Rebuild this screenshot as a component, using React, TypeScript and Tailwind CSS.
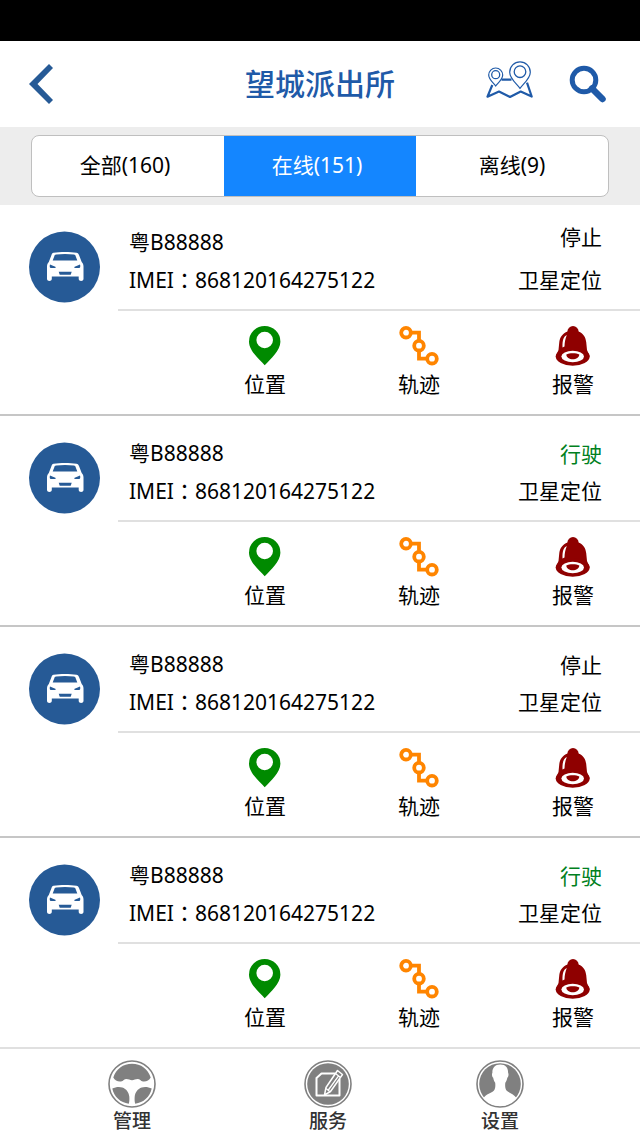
type Status = 'stopped' | 'driving';

interface Vehicle {
  id: number;
  plate: string;
  imei: string;
  status: Status;
  spaced?: boolean;
}

const vehicles: Vehicle[] = [
  { id: 1, plate: '粤B88888', imei: '868120164275122', status: 'stopped', spaced: true },
  { id: 2, plate: '粤B88888', imei: '868120164275122', status: 'driving' },
  { id: 3, plate: '粤B88888', imei: '868120164275122', status: 'stopped' },
  { id: 4, plate: '粤B88888', imei: '868120164275122', status: 'driving' },
];

const tabs = [
  { label: '全部(160)', active: false },
  { label: '在线(151)', active: true },
  { label: '离线(9)', active: false },
];

function BackIcon() {
  return (
    <svg width="24" height="40" viewBox="0 0 24 40" fill="#265a96">
      <path d="M0 20 20 0l4 4L8.5 20 24 36l-4 4z" />
    </svg>
  );
}

function MapIcon() {
  return (
    <svg width="48" height="38" viewBox="0 0 48 38" fill="none" stroke="#1f5aa8">
      <path
        d="M6.3 24 1.5 35.7 13 30.6 24 36l10.7-5.4 11 4.9L41 21.7M15.5 18.7H25.500"
        strokeWidth="2.2"
        strokeLinejoin="round"
      />
      <path d="M9.7 25C7.5 22 2.7 18.5 2.7 14a7 7 0 0 1 14 0c0 4.5-4.8 8-7 11z" strokeWidth="1.2" />
      <circle cx="9.7" cy="13.7" r="4" strokeWidth="1.3" />
      <path d="M34 27.3C31 23 23.7 17.7 23.7 11.2a10.3 10.3 0 0 1 20.6 0C44.3 17.7 37 23 34 27.3z" strokeWidth="1.2" />
      <circle cx="34" cy="10.7" r="5.8" strokeWidth="1.3" />
    </svg>
  );
}

function SearchIcon() {
  return (
    <svg width="38" height="38" viewBox="0 0 38 38" fill="none" stroke="#1f5aa8">
      <circle cx="15" cy="15" r="11.8" strokeWidth="5" />
      <path d="M23 23.500 33.500 34" strokeWidth="6.500" strokeLinecap="round" />
    </svg>
  );
}

function CarBadge() {
  return (
    <svg width="71" height="72" viewBox="0 0 71 72">
      <circle cx="35.5" cy="36" r="35.5" fill="#265a96" />
      <path
        d="M24.5 21.8C31 20.8 41 20.8 47.5 21.8c1.400.3 2 1 2.600 2.400l2.600 6.800c1.200 1.200 1.800 2.700 1.800 4.500v12.500c0 2.500-4.800 2.500-4.800 0V45.500H22.800v2.500c0 2.500-4.800 2.500-4.800 0V35.500c0-1.800.6-3.300 1.800-4.500l2.600-6.800c.5-1.400 1-2.100 2.100-2.400z"
        fill="#fff"
      />
      <g fill="#265a96">
        <path d="M27 23.6c6-.8 12-.8 18 0 .9.200 1.300.5 1.600 1.300l1.700 4.600H23.700l1.700-4.600c.3-.8.700-1.200 1.600-1.300z" />
        <path d="M21 33.500l5.300 2.200c.7.300.5 1.200-.3 1.200h-4.200c-1 0-1.400-1.500-.8-3.400zM51 33.500l-5.300 2.200c-.7.300-.5 1.200.3 1.200h4.200c1 0 1.400-1.500.8-3.400zM29.700 40.700h13l-1 3h-11z" />
      </g>
    </svg>
  );
}

function PinIcon() {
  return (
    <svg width="42" height="40" viewBox="0 0 42 40" fill="#008a00">
      <path
        fillRule="evenodd"
        d="M20.7 39.3C15 33 5 24.5 5 15.7a15.7 15.7 0 0 1 31.4 0c0 8.8-10 17.3-15.7 23.6zM20.7 5.7a8.3 8.3 0 1 0 0 16.6 8.3 8.3 0 0 0 0-16.6z"
      />
    </svg>
  );
}

function TrackIcon() {
  return (
    <svg width="42" height="40" viewBox="0 0 42 40" fill="none" stroke="#ff8500" strokeWidth="3.8">
      <circle cx="8" cy="6.7" r="4.8" />
      <circle cx="21" cy="19.7" r="4.8" />
      <circle cx="34" cy="32.7" r="4.8" />
      <path d="M12.5 6.700H21v8.500M21 24v8.700h8.500" />
    </svg>
  );
}

function BellIcon() {
  return (
    <svg width="42" height="40" viewBox="0 0 42 40" fill="#8f0000">
      <circle cx="21" cy="5.6" r="5.6" />
      <path d="M15.5 5.500C10.500 7.500 8 11 7.300 16L6.500 24 3.700 30.500h34L35 24l-.8-8C33.500 11 31.500 7.500 26.500 5.500z" />
      <ellipse cx="20.700" cy="30.500" rx="17" ry="9.200" />
      <ellipse cx="20.700" cy="30.500" rx="11.300" ry="5.800" fill="#fff" />
      <path d="M14.300 28.500c3-1.600 10-1.600 13 0 0 3-3.200 4.800-6.500 4.800s-6.500-1.800-6.500-4.800z" />
      <path d="M14.800 9c-3.300 1.500-4.500 5-4.300 12.500l2-1c.2-4.500.8-8 2.300-11.500z" fill="#fff" />
    </svg>
  );
}

function WheelIcon() {
  return (
    <svg width="48" height="48" viewBox="0 0 48 48" fill="#808080">
      <circle cx="24" cy="24" r="23" fill="none" stroke="#808080" strokeWidth="1.6" />
      <path d="M5.300 17.500C8 9 15 3.800 24 3.800S40 9 42.700 17.500c-1.500 3-4.700 4.500-7.700 4-2.500-.4-3-2.500-5.500-2.500-2 0-3.500 1.200-5.500 1.200s-3.500-1.200-5.500-1.200c-2.500 0-3 2.100-5.500 2.500-3 .5-6.200-1-7.700-4z" />
      <path d="M4.300 28.500c3-1.500 7-2 10-1 4 1.300 6.500 5 7 9 .2 2.500.2 5-.5 7.300C12.500 42.500 6 37 4.300 28.500z" />
      <path d="M43.700 28.500c-3-1.500-7-2-10-1-4 1.300-6.500 5-7 9-.2 2.500-.2 5 .5 7.300C35.500 42.500 42 37 43.700 28.500z" />
    </svg>
  );
}

function ServiceIcon() {
  return (
    <svg width="48" height="48" viewBox="0 0 48 48">
      <circle cx="24" cy="24" r="23" fill="none" stroke="#808080" strokeWidth="1.6" />
      <circle cx="24" cy="24" r="20.800" fill="#808080" />
      <path
        d="M31 13.500H17.500L12.500 18v17.500H35.500V19"
        fill="none"
        stroke="#fff"
        strokeWidth="2"
        strokeLinejoin="round"
      />
      <path
        d="M33.500 10.500 38.500 14.500 26.500 31.500 20.500 35 22 27.500z"
        fill="#808080"
        stroke="#fff"
        strokeWidth="1.5"
        strokeLinejoin="round"
      />
      <path d="M31.500 13.500 36.300 17.300M34.200 16.300 24 30.500M22 28.500l3.700 2.900" stroke="#fff" strokeWidth="1.3" />
    </svg>
  );
}

function PersonIcon() {
  return (
    <svg width="48" height="48" viewBox="0 0 48 48">
      <circle cx="24" cy="24" r="23" fill="none" stroke="#808080" strokeWidth="1.6" />
      <circle cx="24" cy="24" r="20.800" fill="#808080" />
      <path
        d="M24.300 4.500c5.500 0 8 3.500 7.800 8.500.8.8.4 4-.8 4.800-.4 2.200-1 3.700-2 5-.4 3.700 0 6.200 1.200 7.700 2.500 2.500 7.500 3.500 10 7.500C36.500 43 30.500 46 24 46S11.500 43 7.500 38c2.500-4 8-5 10.500-7.500 1.200-1.500 1.600-4 1.200-7.700-1-1.300-1.600-2.800-2-5-1.200-.8-1.600-4-.8-4.800-.2-5 2.400-8.500 7.900-8.500z"
        fill="#fff"
      />
    </svg>
  );
}

const actions = [
  { label: '位置', Icon: PinIcon },
  { label: '轨迹', Icon: TrackIcon },
  { label: '报警', Icon: BellIcon },
];

const navItems = [
  { label: '管理', Icon: WheelIcon },
  { label: '服务', Icon: ServiceIcon },
  { label: '设置', Icon: PersonIcon },
];

function VehicleRow({ vehicle }: { vehicle: Vehicle }) {
  const driving = vehicle.status === 'driving';

  return (
    <li className="flex border-b-2 border-[#c6c6c6] last:border-[#e0e0e0]">
      <div className="w-[118px] shrink-0 pl-[29px] pt-[26px]">
        <CarBadge />
      </div>
      <div className="flex-1">
        <div className="flex items-end justify-between border-b-2 border-[#e0e0e0] pl-[11px] pr-[38px] pt-3 pb-2.5 h-[106px] leading-[37px]">
          <div>
            <h2>{vehicle.plate}</h2>
            <p>
              IMEI<span className="font-['Noto_Sans_CJK_TC',sans-serif]">：</span>
              {vehicle.imei}
            </p>
          </div>
          <div className={`flex flex-col items-end ${vehicle.spaced ? 'gap-1.5' : ''}`}>
            <span className={driving ? 'text-[#008020]' : ''}>{driving ? '行驶' : '停止'}</span>
            <span>卫星定位</span>
          </div>
        </div>
        <div className="flex justify-between pl-[126px] pr-[46px] pt-[15px] pb-3">
          {actions.map(({ label, Icon }) => (
            <button key={label} type="button" className="flex flex-col items-center leading-9">
              <Icon />
              {label}
            </button>
          ))}
        </div>
      </div>
    </li>
  );
}

export default function App() {
  return (
    <div className="min-h-screen bg-white text-black text-[21px] font-['Noto_Sans','Noto_Sans_CJK_SC',sans-serif]">
      <div className="h-[41px] bg-black" />
      <header className="grid grid-cols-[1fr_auto_1fr] items-center h-[86px] pl-[33px] pr-[33px]">
        <button type="button" aria-label="返回" className="justify-self-start -ml-1">
          <BackIcon />
        </button>
        <h1 className="text-[30px] leading-10 font-medium text-[#1f5aa8]">望城派出所</h1>
        <div className="flex items-center justify-end gap-[35px]">
          <button type="button" aria-label="地图" className="pb-2">
            <MapIcon />
          </button>
          <button type="button" aria-label="搜索">
            <SearchIcon />
          </button>
        </div>
      </header>

      <div className="bg-[#ededed] px-[31px] py-2">
        <div className="grid grid-cols-3 h-[62px] bg-white border border-[#bfbfbf] rounded-lg overflow-hidden">
          {tabs.map((tab) => (
            <button
              key={tab.label}
              type="button"
              aria-pressed={tab.active}
              className={`pr-1.5 last:pr-0 ${tab.active ? 'bg-[#1486ff] text-white' : ''}`}
            >
              {tab.label}
            </button>
          ))}
        </div>
      </div>

      <ul>
        {vehicles.map((vehicle) => (
          <VehicleRow key={vehicle.id} vehicle={vehicle} />
        ))}
      </ul>

      <nav className="grid grid-cols-[33fr_16fr_27fr] pt-[11px] pr-8 text-[19px] leading-[26px] font-medium text-[#333]">
        {navItems.map(({ label, Icon }) => (
          <a key={label} href="#" className="flex flex-col items-center">
            <Icon />
            {label}
          </a>
        ))}
      </nav>
    </div>
  );
}
